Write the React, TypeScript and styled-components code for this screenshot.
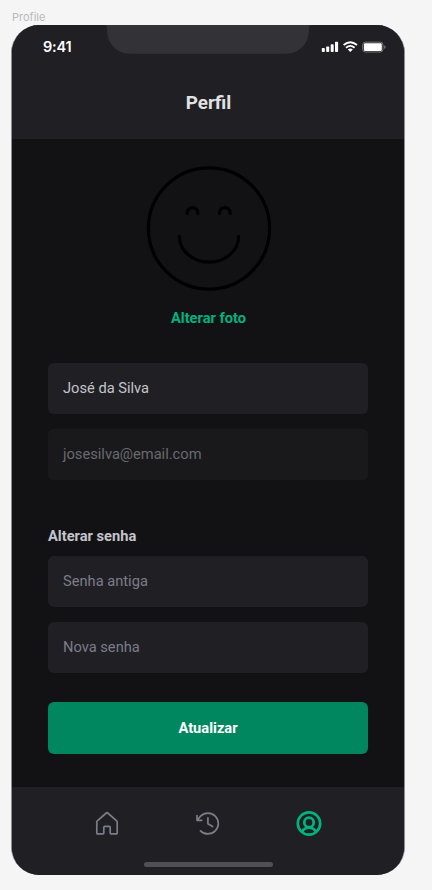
import React from 'react';
import styled, { createGlobalStyle } from 'styled-components';

const GlobalStyle = createGlobalStyle`
  * { box-sizing: border-box; }
  body {
    margin: 0;
    background: #f5f5f5;
    font-family: Roboto, "Liberation Sans", sans-serif;
  }
`;

const Canvas = styled.div`
  width: 432px;
  height: 890px;
  padding: 10px 0 0 11px;
  overflow: hidden;
`;

const FrameLabel = styled.div`
  height: 15px;
  padding-left: 1px;
  font: 400 11px/14px Inter, sans-serif;
  color: #b9b9b9;
`;

const Phone = styled.div`
  display: flex;
  flex-direction: column;
  width: 394px;
  height: 850px;
  border: solid #8d8d8e;
  border-width: 0 1px;
  border-radius: 28px;
  overflow: hidden;
  background: #121214;
`;

const Header = styled.header`
  height: 114px;
  flex: none;
  background: #202024;
`;

const StatusBar = styled.div`
  display: flex;
  justify-content: space-between;
  height: 44px;
  padding: 0 18px 0 31px;
`;

const Time = styled.span`
  width: 52px;
  padding-top: 12px;
  font: 600 14.5px/20px Inter, sans-serif;
  letter-spacing: -0.2px;
  color: #fff;
`;

const Notch = styled.svg`
  display: block;
  width: 206px;
  height: 29px;
  flex: none;
`;

const StatusIcons = styled.svg`
  display: block;
  width: 66px;
  height: 14px;
  margin-top: 15px;
`;

const Title = styled.h1`
  margin: 23px 0 0;
  padding-left: 1px;
  text-align: center;
  font-size: 18.8px;
  line-height: 22px;
  font-weight: 700;
  color: #e1e1e6;
`;

const Content = styled.main`
  display: flex;
  flex-direction: column;
  height: 648px;
  flex: none;
  padding: 27px 36px 0;
`;

const Avatar = styled.svg`
  display: block;
  width: 126px;
  height: 126px;
  margin: 0 0 0 98px;
`;

const PhotoLink = styled.a`
  margin-top: 16px;
  padding-left: 1px;
  text-align: center;
  font-size: 14.66px;
  line-height: 20px;
  font-weight: 700;
  color: #00b37e;
`;

const Field = styled.div<{ $tone?: 'value' | 'placeholder' | 'disabled' }>`
  display: flex;
  align-items: center;
  flex: none;
  height: 51px;
  margin-bottom: 15px;
  padding: 0 15px 2px;
  border-radius: 6px;
  font-size: 14.66px;
  line-height: 20px;
  background: ${({ $tone }) => ($tone === 'disabled' ? '#19191b' : '#202024')};
  color: ${({ $tone }) =>
    $tone === 'value' ? '#c4c4cc' : $tone === 'disabled' ? '#6a6a6f' : '#7c7c8a'};
`;

const Identity = styled.section`
  margin-top: 35px;
`;

const Passwords = styled.section`
  margin-top: 31px;
`;

const SectionTitle = styled.h2`
  margin: 0 0 10px;
  font-size: 14.66px;
  line-height: 20px;
  font-weight: 700;
  color: #c4c4cc;
`;

const SubmitButton = styled.button`
  flex: none;
  height: 52px;
  margin: 14px 0 0;
  border: 0;
  border-radius: 6px;
  background: #00875f;
  color: #fff;
  font: 700 14.66px/20px Roboto, sans-serif;
`;

const TabBar = styled.nav`
  display: flex;
  flex-direction: column;
  align-items: center;
  flex: 1;
  background: #202024;
`;

const Tabs = styled.div`
  display: flex;
  justify-content: space-between;
  width: 230px;
  margin: 22px 0 0;
`;

const TabIcon = styled.svg<{ $active?: boolean }>`
  display: block;
  width: 28px;
  height: 28px;
  fill: none;
  stroke: ${({ $active }) => ($active ? '#00b37e' : '#7c7c8a')};
  stroke-width: ${({ $active }) => ($active ? 2.7 : 1.7)};
  stroke-linecap: round;
  stroke-linejoin: round;
`;

const HomeIndicator = styled.div`
  width: 129px;
  height: 5px;
  margin: 25px 0 0;
  border-radius: 3px;
  background: #505054;
`;

export default function App() {
  return (
    <>
      <GlobalStyle />
      <Canvas>
        <FrameLabel>Profile</FrameLabel>
        <Phone>
          <Header>
            <StatusBar>
              <Time>9:41</Time>
              <Notch viewBox="0 0 206 29">
                <path
                  d="M0 0C1.5 0 2 1.5 2 4C2 18 11 28.7 25 28.7H181C195 28.7 204 18 204 4C204 1.5 204.5 0 206 0Z"
                  fill="#323237"
                />
              </Notch>
              <StatusIcons viewBox="0 0 66 14">
                <g fill="#fff">
                  <rect x="1.8" y="8" width="3" height="4" rx="0.8" />
                  <rect x="6.2" y="6.4" width="3" height="5.6" rx="0.8" />
                  <rect x="10.7" y="4.2" width="3" height="7.8" rx="0.8" />
                  <rect x="15" y="1.8" width="3.1" height="10.2" rx="0.8" />
                  <path d="M27.8 9.4Q30.3 7.7 32.8 9.4L30.3 12Z" />
                </g>
                <g fill="none" stroke="#fff" strokeWidth="1.8">
                  <path d="M23.6 5Q30.3 -0.6 37 5" />
                  <path d="M26 7.7Q30.3 4.1 34.6 7.7" />
                </g>
                <rect x="42.7" y="2.2" width="20.2" height="9.8" rx="2.6" fill="none" stroke="#77777a" />
                <rect x="43.9" y="3.3" width="17.9" height="7.7" rx="1.1" fill="#fff" />
                <path d="M64.2 5.3Q65.7 6 65.7 7.1T64.2 9Z" fill="#77777a" />
              </StatusIcons>
            </StatusBar>
            <Title>Perfil</Title>
          </Header>
          <Content>
            <Avatar viewBox="0 0 126 126" fill="none" stroke="#000" strokeWidth="3.2" strokeLinecap="round">
              <circle cx="63" cy="62.5" r="60.6" />
              <path
                d="M41.2 48.8V47A5.3 5.3 0 0 1 51.8 47V48.8M73.5 48.8V47A5.3 5.3 0 0 1 84.1 47V48.8"
                strokeLinecap="butt"
              />
              <path d="M33.4 70.4A29.6 25.8 0 0 0 92.6 70.4" />
            </Avatar>
            <PhotoLink>Alterar foto</PhotoLink>
            <Identity>
              <Field $tone="value">José da Silva</Field>
              <Field $tone="disabled">josesilva@email.com</Field>
            </Identity>
            <Passwords>
              <SectionTitle>Alterar senha</SectionTitle>
              <Field>Senha antiga</Field>
              <Field>Nova senha</Field>
            </Passwords>
            <SubmitButton>Atualizar</SubmitButton>
          </Content>
          <TabBar>
            <Tabs>
              <TabIcon viewBox="0 0 28 28">
                <path d="M3.8 12.9Q3.8 12.3 4.3 11.8L13.3 4Q14 3.4 14.7 4L23.7 11.8Q24.2 12.3 24.2 12.9V23.9Q24.2 24.9 23.2 24.9H18Q17.2 24.9 17.2 24.1V18.5Q17.2 17.4 16 17.4H12Q10.8 17.4 10.8 18.5V24.1Q10.8 24.9 10 24.9H4.8Q3.8 24.9 3.8 23.9Z" />
              </TabIcon>
              <TabIcon viewBox="0 0 28 28">
                <path d="M3 6.6V11.3H7.8M3.2 11.1L6.5 7.2A10.4 10.4 0 1 1 6.5 21.8M13.9 8.9V14.8L18.6 17.5" />
              </TabIcon>
              <TabIcon $active viewBox="0 0 28 28">
                <circle cx="14" cy="14.5" r="11.2" />
                <circle cx="14" cy="13.4" r="4.7" />
                <path d="M7.2 22.6A7.9 7.9 0 0 1 20.8 22.6" />
              </TabIcon>
            </Tabs>
            <HomeIndicator />
          </TabBar>
        </Phone>
      </Canvas>
    </>
  );
}
